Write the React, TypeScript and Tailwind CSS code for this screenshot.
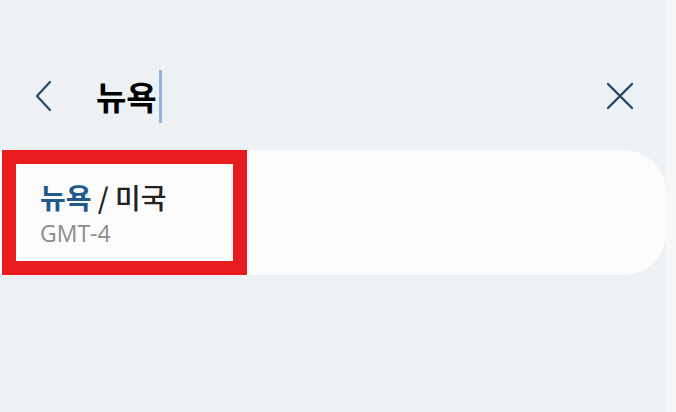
import React from "react";

export default function App() {
  return (
    <div
      className="flex w-[676px] h-[412px] overflow-hidden"
      style={{ fontFamily: '"Roboto", "Noto Sans CJK KR", sans-serif' }}
    >
      <div className="flex flex-col w-[666px] h-full bg-[#edf1f4]">
        <div className="flex items-center h-[60px] mt-[66px]">
          <svg className="ml-[33px]" width="20" height="32" viewBox="0 0 20 32" fill="none">
            <path d="M17 2 L4 16 L17 30" stroke="#24486a" strokeWidth="2.2" strokeLinecap="round" strokeLinejoin="round" />
          </svg>
          <div className="flex items-center ml-[43px]">
            <span
              className="text-[33px] font-bold text-black leading-none"
              style={{ fontFamily: '"Noto Sans CJK KR", sans-serif' }}
            >
              뉴욕
            </span>
            <span className="w-[3px] h-[53px] bg-[#8fb6de] ml-[2px]" />
          </div>
          <svg className="ml-auto mr-[32px]" width="28" height="28" viewBox="0 0 28 28" fill="none">
            <path d="M2 2 L26 26 M26 2 L2 26" stroke="#24486a" strokeWidth="2.4" strokeLinecap="round" />
          </svg>
        </div>
        <div className="flex mt-[24px] h-[125px] bg-[#fcfcfc] rounded-r-[42px]">
          <div className="ml-[2px] w-[245px] h-full border-[14px] border-[#e81c1f] bg-[#fcfcfc] pl-[24px] pt-[15px]">
            <div
              className="text-[28px] leading-[36px] text-[#222]"
              style={{ fontFamily: '"Noto Sans CJK KR", sans-serif' }}
            >
              <span className="font-bold text-[#1e5a8c]">뉴욕</span>
              <span className="font-medium"> / 미국</span>
            </div>
            <div
              className="text-[23px] leading-[28px] text-[#8c8c8c] mt-[4px]"
              style={{ fontFamily: '"Open Sans", sans-serif' }}
            >
              GMT-4
            </div>
          </div>
        </div>
      </div>
      <div className="w-[10px] h-full bg-[#f6f7f8]" />
    </div>
  );
}
